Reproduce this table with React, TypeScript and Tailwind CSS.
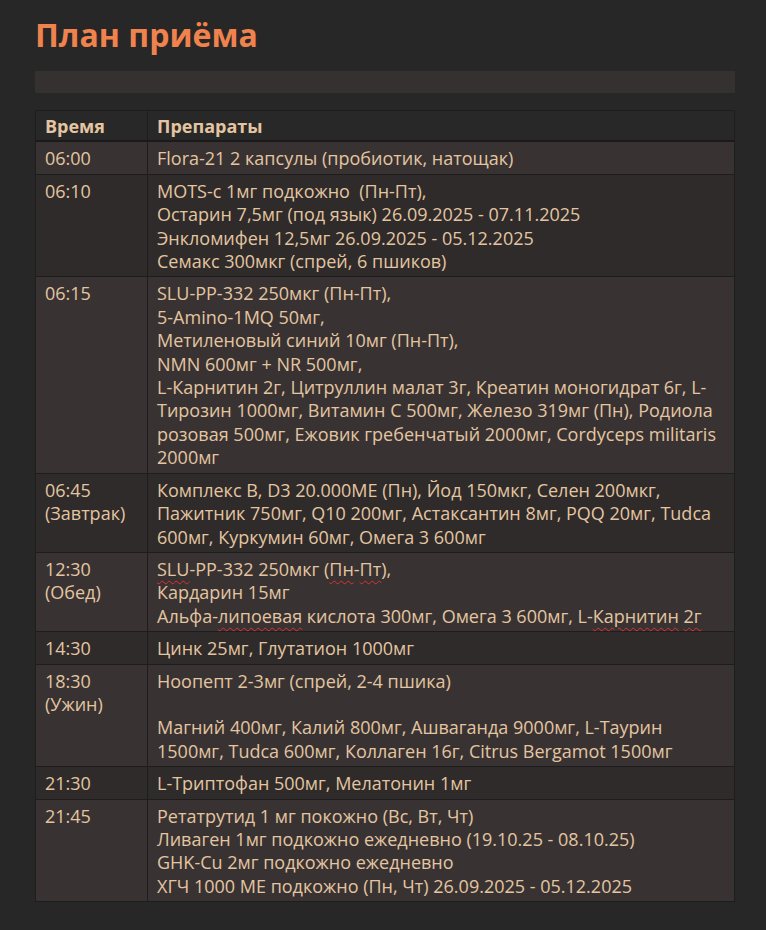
import React from 'react';

// Строки таблицы: время + список препаратов (каждый элемент — отдельная строка)
type Row = { time: string[]; items: React.ReactNode[] };

const Spell = ({ children }: { children: React.ReactNode }) => (
  <span className="underline decoration-wavy decoration-[#e03030] decoration-1 underline-offset-[4px]">{children}</span>
);

const rows: Row[] = [
  { time: ['06:00'], items: ['Flora-21 2 капсулы (пробиотик, натощак)'] },
  {
    time: ['06:10'],
    items: [
      'MOTS-c 1мг подкожно\u00a0 (Пн-Пт),',
      'Остарин 7,5мг (под язык) 26.09.2025 - 07.11.2025',
      'Энкломифен 12,5мг 26.09.2025 - 05.12.2025',
      'Семакс 300мкг (спрей, 6 пшиков)',
    ],
  },
  {
    time: ['06:15'],
    items: [
      'SLU-PP-332 250мкг (Пн-Пт),',
      '5-Amino-1MQ 50мг,',
      'Метиленовый синий 10мг (Пн-Пт),',
      'NMN 600мг + NR 500мг,',
      'L-Карнитин 2г, Цитруллин малат 3г, Креатин моногидрат 6г, L-Тирозин 1000мг, Витамин C 500мг, Железо 319мг (Пн), Родиола розовая 500мг, Ежовик гребенчатый 2000мг, Cordyceps militaris 2000мг',
    ],
  },
  {
    time: ['06:45', '(Завтрак)'],
    items: [
      'Комплекс B, D3 20.000МЕ (Пн), Йод 150мкг, Селен 200мкг, Пажитник 750мг, Q10 200мг, Астаксантин 8мг, PQQ 20мг, Tudca 600мг, Куркумин 60мг, Омега 3 600мг',
    ],
  },
  {
    time: ['12:30', '(Обед)'],
    items: [
      <>
        <Spell>SLU</Spell>-PP-332 250мкг (<Spell>Пн</Spell>-<Spell>Пт</Spell>),
      </>,
      'Кардарин 15мг',
      <>
        Альфа-<Spell>липоевая</Spell> кислота 300мг, Омега 3 600мг, L-<Spell>Карнитин</Spell> <Spell>2г</Spell>
      </>,
    ],
  },
  { time: ['14:30'], items: ['Цинк 25мг, Глутатион 1000мг'] },
  {
    time: ['18:30', '(Ужин)'],
    items: [
      'Ноопепт 2-3мг (спрей, 2-4 пшика)',
      '\u00a0',
      'Магний 400мг, Калий 800мг, Ашваганда 9000мг, L-Таурин 1500мг, Tudca 600мг, Коллаген 16г, Citrus Bergamot 1500мг',
    ],
  },
  { time: ['21:30'], items: ['L-Триптофан 500мг, Мелатонин 1мг'] },
  {
    time: ['21:45'],
    items: [
      'Ретатрутид 1 мг покожно (Вс, Вт, Чт)',
      'Ливаген 1мг подкожно ежедневно (19.10.25 - 08.10.25)',
      'GHK-Cu 2мг подкожно ежедневно',
      'ХГЧ 1000 МЕ подкожно (Пн, Чт) 26.09.2025 - 05.12.2025',
    ],
  },
];

export default function App() {
  return (
    <div className="min-h-screen w-[766px] h-[930px] bg-[#272727] font-['Open_Sans',sans-serif] text-[#e4c5a1] overflow-hidden">
      <div className="pl-[35px] pt-[14px]">
        <h1 className="text-[32px] font-bold text-[#f0834d] leading-[42px]">План приёма</h1>

        <div className="mt-[15px] w-[700px] h-[22px] bg-[#353130]" />

        <table className="mt-[17px] w-[700px] border-collapse text-[18px] leading-[23.4px] table-fixed">
          <colgroup>
            <col className="w-[112px]" />
            <col />
          </colgroup>
          <thead>
            <tr className="bg-[#282828]">
              <th className="border border-[#1d1d1d] border-b-2 border-b-[#1a1a1a] px-[9px] pt-[4px] pb-[2px] text-left font-bold">Время</th>
              <th className="border border-[#1d1d1d] border-b-2 border-b-[#1a1a1a] px-[9px] pt-[4px] pb-[2px] text-left font-bold">Препараты</th>
            </tr>
          </thead>
          <tbody>
            {rows.map((row, i) => (
              <tr key={row.time[0]} className={i % 2 === 0 ? 'bg-[#383332]' : 'bg-[#2e2b2a]'}>
                <td className="border border-[#1d1d1d] px-[9px] pt-[5px] pb-[3px] align-top">
                  {row.time.map((t) => (
                    <div key={t}>{t}</div>
                  ))}
                </td>
                <td className="border border-[#1d1d1d] px-[9px] pt-[5px] pb-[3px] align-top">
                  {row.items.map((it, k) => (
                    <div key={k}>{it}</div>
                  ))}
                </td>
              </tr>
            ))}
          </tbody>
        </table>
      </div>
    </div>
  );
}
